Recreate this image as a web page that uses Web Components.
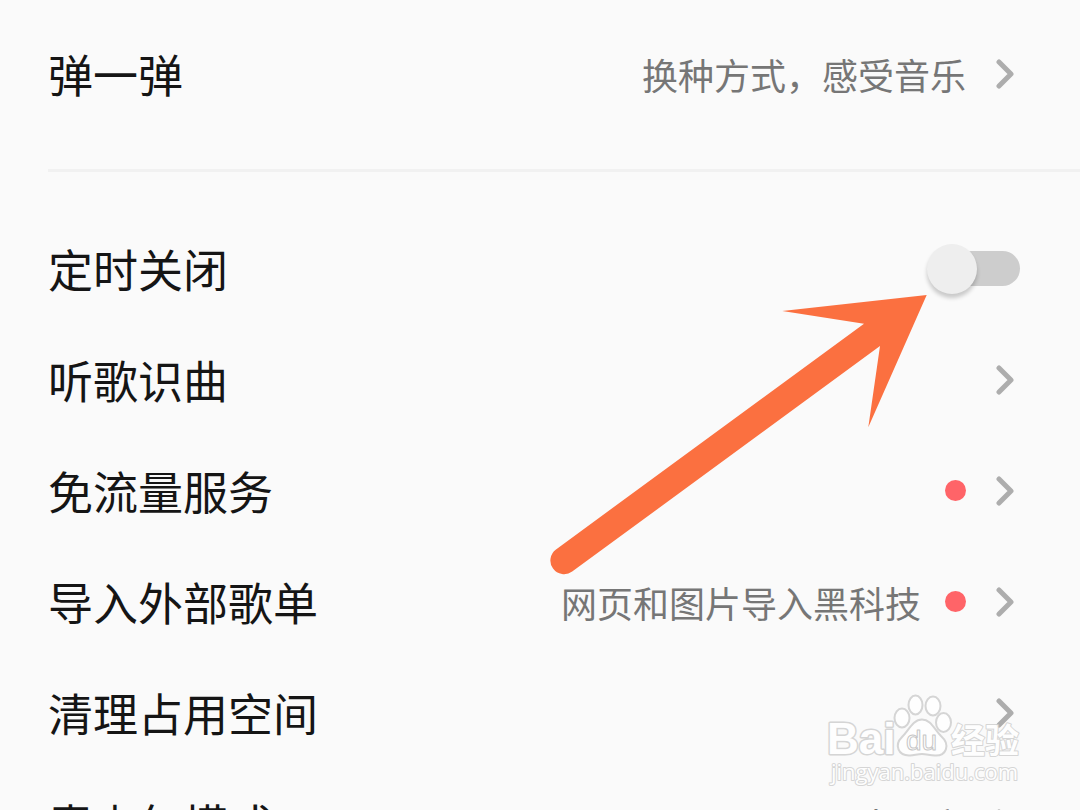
<!DOCTYPE html>
<html lang="zh-CN">
<head>
<meta charset="utf-8">
<meta name="viewport" content="width=device-width, initial-scale=1">
<title>设置</title>
<style>
  body {
    margin: 0;
    background: #fafafa;
    color: #151515;
    font-family: "Noto Sans CJK SC", sans-serif;
  }
</style>
</head>
<body>
<settings-screen>
  <settings-group>
    <settings-row label="弹一弹">换种方式，感受音乐</settings-row>
  </settings-group>
  <settings-group>
    <settings-row label="定时关闭" type="switch"></settings-row>
    <settings-row label="听歌识曲"></settings-row>
    <settings-row label="免流量服务" dot></settings-row>
    <settings-row label="导入外部歌单" dot>网页和图片导入黑科技</settings-row>
    <settings-row label="清理占用空间"></settings-row>
    <settings-row label="青少年模式">未开启</settings-row>
  </settings-group>
  <pointer-arrow slot="overlay"></pointer-arrow>
  <site-watermark slot="overlay"></site-watermark>
</settings-screen>

<script>
class SettingsScreen extends HTMLElement {
  constructor() {
    super();
    const shadow = this.attachShadow({ mode: 'open' });
    shadow.innerHTML = `
      <style>
        :host {
          display: block;
          position: relative;
          height: 100vh;
          overflow: hidden;
        }
        main {
          display: flex;
          flex-direction: column;
          padding-top: 18px;
        }
      </style>
      <main><slot></slot></main>
      <slot name="overlay"></slot>
    `;
  }
}

customElements.define('settings-screen', SettingsScreen);


class SettingsGroup extends HTMLElement {
  constructor() {
    super();
    const shadow = this.attachShadow({ mode: 'open' });
    shadow.innerHTML = `
      <style>
        :host {
          display: flex;
          flex-direction: column;
          margin-left: 48px;
          padding-bottom: 40px;
        }
        :host(:not(:first-child)) {
          border-top: 3px solid #f1f1f1;
          padding-top: 41px;
        }
      </style>
      <slot></slot>
    `;
  }
}

customElements.define('settings-group', SettingsGroup);


const rowStyle = `
  <style>
    :host {
      display: block;
    }
    .row {
      display: flex;
      align-items: center;
      gap: 24px;
      box-sizing: border-box;
      width: 100%;
      height: 111px;
      margin: 0;
      padding: 0 60px 0 0;
      border: 0;
      background: none;
      color: inherit;
      font: inherit;
      text-align: left;
      cursor: pointer;
    }
    .label {
      flex: 1;
      font-size: 45px;
      line-height: 60px;
      white-space: nowrap;
    }
    .value {
      color: #767676;
      font-size: 36px;
      line-height: 48px;
      white-space: nowrap;
    }
    .dot {
      width: 21px;
      height: 21px;
      border-radius: 50%;
      background: #ff6468;
    }
    svg {
      display: block;
      width: 30px;
      height: 30px;
      fill: none;
      stroke: #adadad;
      stroke-width: 5;
      stroke-linecap: round;
      stroke-linejoin: round;
    }
    input {
      appearance: none;
      display: grid;
      align-items: center;
      width: 93px;
      height: 50px;
      margin: 0;
      cursor: pointer;
    }
    input::before,
    input::after {
      content: "";
      grid-area: 1 / 1;
    }
    input::before {
      height: 35px;
      margin-left: 10px;
      border-radius: 18px;
      background: #cdcdcd;
    }
    input::after {
      width: 50px;
      height: 50px;
      border-radius: 50%;
      background: #eeeeee;
      box-shadow: 0 4px 4px rgba(0, 0, 0, 0.2);
    }
    input:checked::after {
      justify-self: end;
    }
  </style>
`;

class SettingsRow extends HTMLElement {
  constructor() {
    super();
    this.shadow = this.attachShadow({ mode: 'open' });
  }

  connectedCallback() {
    this.render();
  }

  render() {
    const label = this.getAttribute('label');

    if (this.getAttribute('type') === 'switch') {
      this.shadow.innerHTML = `
        ${rowStyle}
        <label class="row">
          <span class="label">${label}</span>
          <input type="checkbox" role="switch">
        </label>
      `;
      return;
    }

    this.shadow.innerHTML = `
      ${rowStyle}
      <button class="row" type="button">
        <span class="label">${label}</span>
        <span class="value"><slot></slot></span>
        ${this.hasAttribute('dot') ? '<span class="dot"></span>' : ''}
        <svg viewBox="0 0 30 30" aria-hidden="true">
          <path d="M9 3 L21 15 L9 27"/>
        </svg>
      </button>
    `;
  }
}

customElements.define('settings-row', SettingsRow);


// points at the sleep timer switch
class PointerArrow extends HTMLElement {
  constructor() {
    super();
    const shadow = this.attachShadow({ mode: 'open' });
    shadow.innerHTML = `
      <style>
        :host {
          position: absolute;
          top: 290px;
          right: 150px;
          pointer-events: none;
        }
        svg {
          display: block;
          width: 390px;
          height: 290px;
          fill: #fb7040;
        }
      </style>
      <svg viewBox="540 290 390 290" aria-hidden="true">
        <path d="M926.7 295 L868.3 427.3 L880 346 L572.2 571.6 A13.7 13.7 0 0 1 556 549.4 L864 323.7 L782.3 311 Z"/>
      </svg>
    `;
  }
}

customElements.define('pointer-arrow', PointerArrow);


class SiteWatermark extends HTMLElement {
  constructor() {
    super();
    const shadow = this.attachShadow({ mode: 'open' });
    shadow.innerHTML = `
      <style>
        :host {
          position: absolute;
          right: 50px;
          bottom: 20px;
          pointer-events: none;
        }
        svg {
          display: block;
          width: 210px;
          height: 100px;
          fill: #ffffff;
          stroke: #cfcfcf;
          stroke-width: 1;
          stroke-linejoin: round;
          opacity: 0.85;
        }
        text {
          font-family: "Liberation Sans", "Noto Sans CJK SC", sans-serif;
        }
        .brand {
          font-size: 44px;
          font-weight: bold;
          stroke-width: 3;
          paint-order: stroke;
        }
        .du {
          font-size: 28px;
          stroke: #bdbdbd;
        }
        .name {
          font-size: 34px;
          font-weight: bold;
          stroke-width: 2;
          paint-order: stroke;
        }
        .site {
          font-family: "Open Sans", sans-serif;
          font-size: 22px;
          stroke-width: 2;
          paint-order: stroke;
        }
      </style>
      <svg viewBox="820 690 210 100">
        <text class="brand" x="827" y="754">Bai</text>
        <g stroke-width="2">
          <ellipse cx="902" cy="718" rx="7.5" ry="9.5"/>
          <ellipse cx="915.5" cy="705" rx="7" ry="9.5"/>
          <ellipse cx="933" cy="706" rx="7.5" ry="9.5"/>
          <ellipse cx="943.5" cy="722.500" rx="7.5" ry="9.5"/>
          <path d="M922 719.5 C931 719.5 934 729 941 736 C951 745 946 756 935 755.5 C929 755 926 754 922 754 C918 754 915 755 910 755.5 C898 756 894 745 902 737 C909 730 913 719.5 922 719.5 Z"/>
        </g>
        <text class="du" x="906" y="750">du</text>
        <text class="name" x="951" y="753">经验</text>
        <text class="site" x="831" y="780">jingyan.baidu.com</text>
      </svg>
    `;
  }
}

customElements.define('site-watermark', SiteWatermark);
</script>
</body>
</html>
